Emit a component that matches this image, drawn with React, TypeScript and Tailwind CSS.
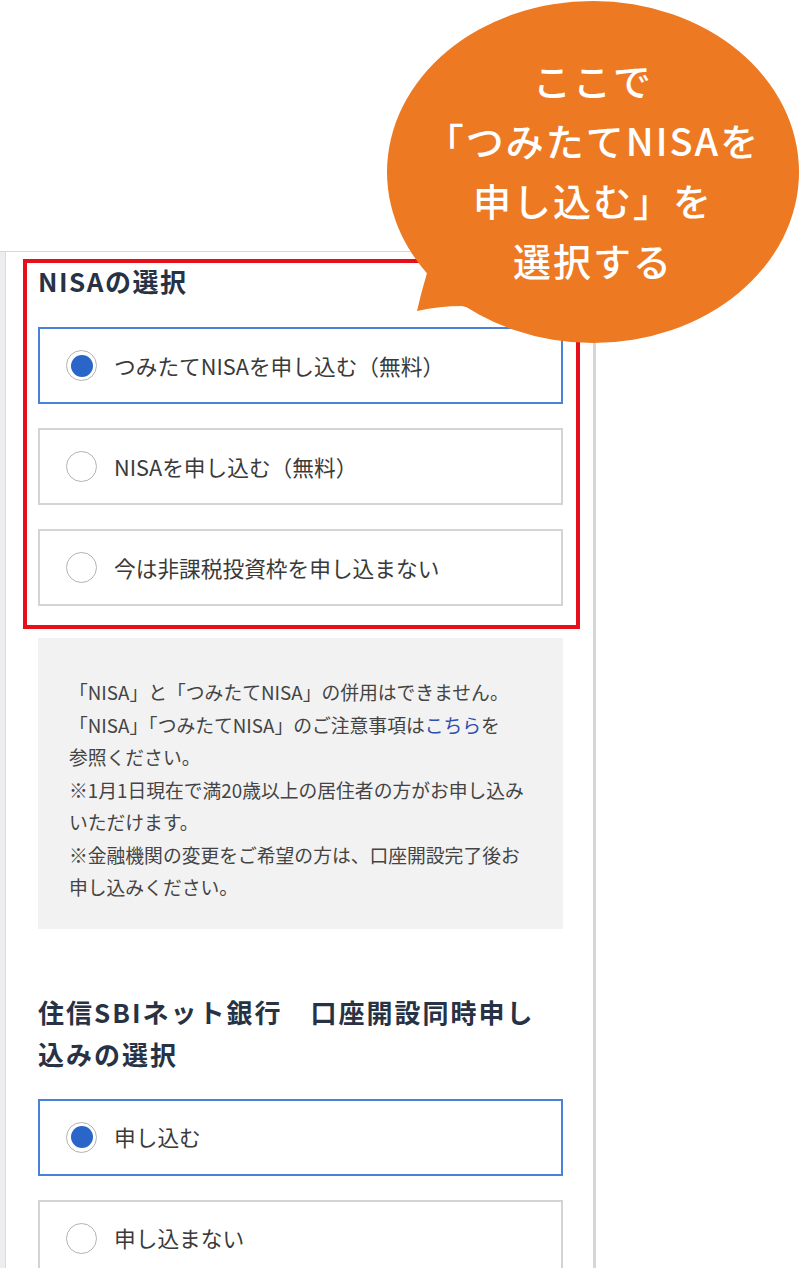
import React from "react";

const Radio = ({ checked }: { checked: boolean }) => (
  <span className="flex h-[31px] w-[31px] shrink-0 items-center justify-center rounded-full border-[1.5px] border-[#b3b3b3] bg-white">
    {checked && <span className="h-[22px] w-[22px] rounded-full bg-[#2a66c8]" />}
  </span>
);

const Option = ({ label, checked }: { label: string; checked: boolean }) => (
  <div
    className={
      checked
        ? "flex h-[77px] items-center gap-[17px] border-2 border-[#4a82d8] bg-white pl-[26px]"
        : "flex h-[77px] items-center gap-[17px] border-2 border-[#d4d4d4] bg-white pl-[26px]"
    }
  >
    <Radio checked={checked} />
    <span className="whitespace-nowrap text-[21.7px] leading-none text-[#3a3a3a]">{label}</span>
  </div>
);

export default function App() {
  return (
    <div className="relative h-[1268px] w-[800px] overflow-hidden bg-white font-['Noto_Sans_CJK_JP','Noto_Sans',sans-serif]">
      <div className="pt-[251px]">
        <div className="flex h-[1017px] w-[596px] border-t border-[#d8d8d8]">
          <div className="w-[6px] shrink-0 border-r border-[#dcdcdf] bg-[#ededef]" />
          <div className="flex-1 pl-[32px] pr-[30px] pt-[8px]">
            <h2 className="text-[26px] font-bold leading-[42px] tracking-[1.5px] text-[#283245]">NISAの選択</h2>
            <div className="mt-[25px] flex flex-col gap-[24px]">
              <Option checked label="つみたてNISAを申し込む（無料）" />
              <Option checked={false} label="NISAを申し込む（無料）" />
              <Option checked={false} label="今は非課税投資枠を申し込まない" />
            </div>
            <div className="mt-[32px] bg-[#f2f2f2] pb-[25px] pl-[31px] pr-[10px] pt-[38px] text-[18.8px] leading-[32.5px] text-[#444444]">
              <div className="whitespace-nowrap">「NISA」と「つみたてNISA」の併用はできません。</div>
              <div className="whitespace-nowrap">
                「NISA」「つみたてNISA」のご注意事項は<span className="text-[#2d4fae]">こちら</span>を
              </div>
              <div className="whitespace-nowrap">参照ください。</div>
              <div className="whitespace-nowrap">※1月1日現在で満20歳以上の居住者の方がお申し込み</div>
              <div className="whitespace-nowrap">いただけます。</div>
              <div className="whitespace-nowrap">※金融機関の変更をご希望の方は、口座開設完了後お</div>
              <div className="whitespace-nowrap">申し込みください。</div>
            </div>
            <h2 className="mt-[62px] text-[26px] font-bold leading-[42px] tracking-[2px] text-[#283245]">
              <span className="block whitespace-nowrap">住信SBIネット銀行　口座開設同時申し</span>
              <span className="block whitespace-nowrap">込みの選択</span>
            </h2>
            <div className="mt-[24px] flex flex-col gap-[24px]">
              <Option checked label="申し込む" />
              <Option checked={false} label="申し込まない" />
            </div>
          </div>
          <div className="w-[3px] shrink-0 bg-[#d6d6da]" />
        </div>
      </div>

      <div className="absolute left-[23px] top-[259px] h-[370px] w-[557px] border-4 border-[#e60f1a]" />

      <svg className="absolute left-0 top-0" width="800" height="360" viewBox="0 0 800 360">
        <ellipse cx="593" cy="172" rx="206" ry="171" fill="#ee7923" />
        <path
          d="M 419 262 L 427 273 Q 421 293 417 311 Q 440 306 462 306 Q 473 308 484 317 L 520 300 L 440 250 Z"
          fill="#ee7923"
        />
      </svg>
      <div className="absolute left-[393px] top-[50px] w-[400px] text-center text-[38px] font-medium leading-[60px] tracking-[2px] text-white">
        <div>ここで</div>
        <div>「つみたてNISAを</div>
        <div>申し込む」を</div>
        <div>選択する</div>
      </div>
    </div>
  );
}
